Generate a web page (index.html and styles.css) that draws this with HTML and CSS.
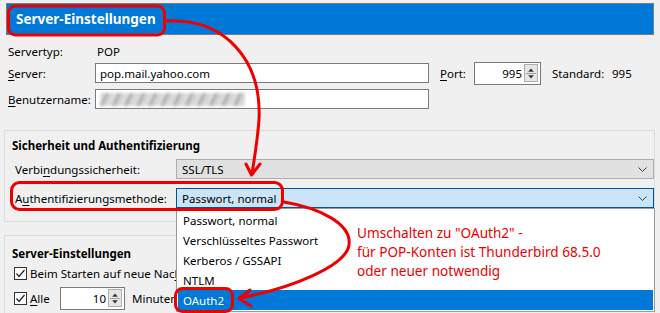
FILE: index.html
```html
<!DOCTYPE html>
<html lang="de">
<head>
<meta charset="utf-8">
<link rel="stylesheet" href="styles.css">
</head>
<body>
<div class="header">Server-Einstellungen</div>
<div class="top">
  <div class="row r1"><span class="lbl">Servertyp:</span><span class="val">POP</span></div>
  <div class="row r2">
    <span class="lbl"><u>S</u>erver:</span>
    <div class="input">pop.mail.yahoo.com</div>
    <span class="port-lbl"><u>P</u>ort:</span>
    <div class="spin port"><span class="num">995</span><span class="spbtn"><svg width="13" height="17" viewBox="0 0 13 17"><path d="M6.5 3 L9.5 6.5 H3.5 Z M3.5 10.5 H9.5 L6.5 14 Z" fill="#333"/><line x1="1" y1="8.5" x2="12" y2="8.5" stroke="#999"/></svg></span></div>
    <span class="std">Standard:</span><span class="stdv">995</span>
  </div>
  <div class="row r3">
    <span class="lbl"><u>B</u>enutzername:</span>
    <div class="input"><span class="blur"></span></div>
  </div>
</div>

<div class="group g1">
  <div class="gtitle">Sicherheit und Authentifizierung</div>
  <div class="srow s1">
    <span class="slbl">Verbi<u>n</u>dungssicherheit:</span>
    <div class="select gray"><span>SSL/TLS</span><svg class="chev" width="9" height="5" viewBox="0 0 9 5"><path d="M0.5 0.5 L4.5 4.5 L8.5 0.5" fill="none" stroke="#444"/></svg></div>
  </div>
  <div class="srow s2">
    <span class="slbl">A<u>u</u>thentifizierungsmethode:</span>
    <div class="select active"><span>Passwort, normal</span><svg class="chev" width="9" height="5" viewBox="0 0 9 5"><path d="M0.5 0.5 L4.5 4.5 L8.5 0.5" fill="none" stroke="#444"/></svg></div>
  </div>
</div>

<div class="group g2">
  <div class="gtitle">Server-Einstellungen</div>
  <div class="crow c1">
    <span class="cb"><svg width="11" height="11" viewBox="0 0 11 11"><path d="M1.5 5.5 L4 8.5 L9.5 2" fill="none" stroke="#222" stroke-width="1.2"/></svg></span>
    <span class="clip c1text">Beim Starten auf neue Nac<u>h</u>richten prüfen</span>
  </div>
  <div class="crow c2">
    <span class="cb"><svg width="11" height="11" viewBox="0 0 11 11"><path d="M1.5 5.5 L4 8.5 L9.5 2" fill="none" stroke="#222" stroke-width="1.2"/></svg></span>
    <span class="alle"><u>A</u>lle</span>
    <div class="spin mins"><span class="num">10</span><span class="spbtn"><svg width="13" height="17" viewBox="0 0 13 17"><path d="M6.5 3 L9.5 6.5 H3.5 Z M3.5 10.5 H9.5 L6.5 14 Z" fill="#333"/><line x1="1" y1="8.5" x2="12" y2="8.5" stroke="#999"/></svg></span></div>
    <span class="clip minuten">Minuten auf neue Nachrichten prüfen</span>
  </div>
</div>

<ul class="dropdown">
  <li>Passwort, normal</li>
  <li>Verschlüsseltes Passwort</li>
  <li>Kerberos / GSSAPI</li>
  <li>NTLM</li>
  <li class="sel">OAuth2</li>
</ul>

<div class="note">Umschalten zu "OAuth2" -<br>für POP-Konten ist Thunderbird 68.5.0<br>oder neuer notwendig</div>

<svg class="annot" width="660" height="313" viewBox="0 0 660 313">
  <g fill="none" stroke="#ee0000" stroke-width="3" stroke-linecap="round" stroke-linejoin="round">
    <rect x="8.5" y="6" width="156" height="29" rx="7"/>
    <rect x="11.5" y="182.5" width="271" height="27" rx="8"/>
    <rect x="175.5" y="288.5" width="57" height="23" rx="7"/>
    <path d="M166 21 C 225 18 262 60 259 120 C 257 145 254 160 252 174"/>
    <polyline points="246,164 251.5,175 260,164"/>
    <path d="M284 202 C 320 208 352 224 349 245 C 346 266 292 288 240 298"/>
    <polyline points="250,290 239,298.5 251,306"/>
  </g>
</svg>
</body>
</html>
```
FILE: styles.css
```css
* { box-sizing: border-box; }
html, body { margin: 0; padding: 0; }
body {
  width: 660px;
  height: 313px;
  overflow: hidden;
  position: relative;
  background: #f0f0f0;
  font-family: "Noto Sans", "Open Sans", sans-serif;
  font-size: 11.5px;
  color: #000;
}
u { text-decoration: underline; text-underline-offset: 2px; }

.header {
  margin: 3px 6px 0 6px;
  height: 32px;
  background: #0078d7;
  border: 1px solid #7a7a7a;
  color: #fff;
  font-weight: bold;
  font-size: 13.5px;
  display: flex;
  align-items: center;
  padding-left: 9px;
}

.top { padding-left: 8px; }
.row { display: flex; align-items: center; }
.r1 { margin-top: 6px; height: 20px; }
.r2 { height: 24px; }
.r3 { margin-top: 3px; height: 22px; }
.lbl { width: 87px; flex: none; }
.val { padding-left: 2px; }
.input {
  width: 334px;
  height: 20px;
  background: #fff;
  border: 1px solid #7a7a7a;
  padding-left: 4px;
  display: flex;
  align-items: center;
}
.blur {
  display: block;
  width: 145px;
  height: 13px;
  background: repeating-linear-gradient(115deg, #d6d6d6 0 5px, #8f8f8f 6px 7px, #c8c8c8 8px 11px);
  filter: blur(1.6px);
  opacity: 0.85;
}
.port-lbl { margin-left: 11px; width: 34px; }
.spin {
  height: 23px;
  background: #fff;
  border: 1px solid #7a7a7a;
  display: flex;
  align-items: center;
  justify-content: flex-end;
  padding-right: 2px;
  flex: none;
}
.spin .num { margin-right: 2px; }
.spbtn {
  width: 14px;
  height: 18px;
  border: 1px solid #adadad;
  background: #e6e6e6;
  display: flex;
  align-items: center;
  justify-content: center;
}
.spbtn svg { display: block; }
.port { width: 67px; }
.std { margin-left: 11px; width: 60px; }

.group {
  margin: 0 5px 0 4px;
  border: 1px solid #dcdcdc;
}
.g1 { margin-top: 20px; height: 92px; padding: 4px 0 0 10px; }
.g2 { margin-top: 13px; height: 90px; padding: 7px 0 0 9px; }
.gtitle { height: 20px; display: flex; align-items: center; font-weight: bold; margin-left: -3px; }
.g2 .gtitle { margin-left: -2px; }
.srow { display: flex; align-items: center; height: 20px; }
.s1 { margin-top: 4px; }
.s2 { margin-top: 9px; }
.slbl { width: 161px; flex: none; }
.select {
  flex: 1;
  height: 20px;
  border: 1px solid #adadad;
  display: flex;
  align-items: center;
  justify-content: space-between;
  padding: 0 6px 0 5px;
}
.select.gray { background: #e1e1e1; }
.select.active { background: #cce4f7; border-color: #005499; }
.chev { display: block; }

.crow { display: flex; align-items: center; }
.c1 { height: 20px; }
.c2 { height: 24px; margin-top: 3px; }
.cb {
  width: 13px;
  height: 13px;
  border: 1px solid #333;
  background: #fff;
  display: flex;
  align-items: center;
  justify-content: center;
  margin-right: 3px;
  flex: none;
}
.cb svg { display: block; }
.clip { white-space: nowrap; overflow: hidden; flex: none; }
.c1text { width: 146px; }
.alle { width: 30px; }
.mins { width: 65px; }
.minuten { margin-left: 7px; width: 44px; }

.dropdown {
  position: absolute;
  left: 176px;
  top: 208px;
  width: 479px;
  height: 104px;
  margin: 0;
  padding: 1px;
  list-style: none;
  background: #fff;
  border: 1px solid #9a9a9a;
}
.dropdown li {
  height: 20px;
  display: flex;
  align-items: center;
  padding-left: 5px;
}
.dropdown li.sel { background: #0078d7; color: #fff; }

.note {
  position: absolute;
  left: 357px;
  top: 223px;
  color: #ee0000;
  font-size: 13.6px;
  line-height: 19px;
}
.annot { position: absolute; left: 0; top: 0; pointer-events: none; }
```
